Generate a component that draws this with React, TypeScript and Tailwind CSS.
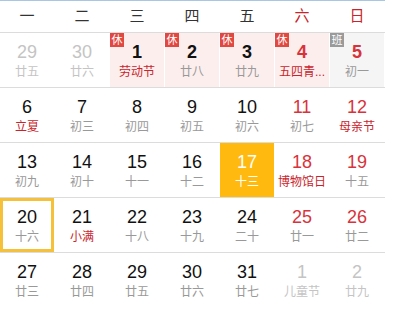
type Day = {
  n: number
  lunar: string
  kind?: "out" | "weekend" | "today"
  lunarRed?: boolean
  bg?: "holiday" | "work"
  badge?: "休" | "班"
  selected?: boolean
}

const weekdays = ["一", "二", "三", "四", "五", "六", "日"]

const rows: Day[][] = [
  [
    { n: 29, lunar: "廿五", kind: "out" },
    { n: 30, lunar: "廿六", kind: "out" },
    { n: 1, lunar: "劳动节", lunarRed: true, bg: "holiday", badge: "休" },
    { n: 2, lunar: "廿八", bg: "holiday", badge: "休" },
    { n: 3, lunar: "廿九", bg: "holiday", badge: "休" },
    { n: 4, lunar: "五四青...", kind: "weekend", lunarRed: true, bg: "holiday", badge: "休" },
    { n: 5, lunar: "初一", kind: "weekend", bg: "work", badge: "班" }
  ],
  [
    { n: 6, lunar: "立夏", lunarRed: true },
    { n: 7, lunar: "初三" },
    { n: 8, lunar: "初四" },
    { n: 9, lunar: "初五" },
    { n: 10, lunar: "初六" },
    { n: 11, lunar: "初七", kind: "weekend" },
    { n: 12, lunar: "母亲节", kind: "weekend", lunarRed: true }
  ],
  [
    { n: 13, lunar: "初九" },
    { n: 14, lunar: "初十" },
    { n: 15, lunar: "十一" },
    { n: 16, lunar: "十二" },
    { n: 17, lunar: "十三", kind: "today" },
    { n: 18, lunar: "博物馆日", kind: "weekend", lunarRed: true },
    { n: 19, lunar: "十五", kind: "weekend" }
  ],
  [
    { n: 20, lunar: "十六", selected: true },
    { n: 21, lunar: "小满", lunarRed: true },
    { n: 22, lunar: "十八" },
    { n: 23, lunar: "十九" },
    { n: 24, lunar: "二十" },
    { n: 25, lunar: "廿一", kind: "weekend" },
    { n: 26, lunar: "廿二", kind: "weekend" }
  ],
  [
    { n: 27, lunar: "廿三" },
    { n: 28, lunar: "廿四" },
    { n: 29, lunar: "廿五" },
    { n: 30, lunar: "廿六" },
    { n: 31, lunar: "廿七" },
    { n: 1, lunar: "儿童节", kind: "out" },
    { n: 2, lunar: "廿九", kind: "out" }
  ]
]

function Cell({ d }: { d: Day }) {
  const bg =
    d.kind === "today"
      ? "bg-[#ffb90f]"
      : d.bg === "holiday"
        ? "bg-[#fdeeee]"
        : d.bg === "work"
          ? "bg-[#f5f5f5]"
          : "bg-white"
  const numColor =
    d.kind === "today"
      ? "text-white"
      : d.kind === "out"
        ? "text-[#c4c4c4]"
        : d.kind === "weekend"
          ? "text-[#d8333b]"
          : "text-[#111]"
  const lunarColor =
    d.kind === "today"
      ? "text-white"
      : d.kind === "out"
        ? "text-[#c4c4c4]"
        : d.lunarRed
          ? "text-[#c9242c]"
          : "text-[#999]"

  return (
    <div
      className={`relative flex h-[54px] flex-col items-center justify-center ${bg} ${
        d.selected ? "border-[3px] border-[#f5c13a]" : ""
      }`}
    >
      {d.badge && (
        <span
          className={`absolute left-0 top-0 flex h-[14px] w-[14px] items-center justify-center text-[11px] leading-none text-white ${
            d.badge === "休" ? "bg-[#e2483f]" : "bg-[#9a9a9a]"
          }`}
        >
          {d.badge}
        </span>
      )}
      <span className={`text-[18px] leading-[22px] ${d.badge ? "font-bold" : ""} ${numColor}`}>
        {d.n}
      </span>
      <span className={`mt-[1px] whitespace-nowrap text-[12px] leading-[16px] ${lunarColor}`}>
        {d.lunar}
      </span>
    </div>
  )
}

export default function App() {
  return (
    <div
      className="h-[319px] w-[394px] overflow-hidden bg-white"
      style={{ fontFamily: '"Liberation Sans", "Noto Sans CJK SC", sans-serif' }}
    >
      <div className="h-px w-[385px] bg-[#a9c7e3]" />
      <div className="grid h-[32px] w-[385px] grid-cols-[repeat(7,54px)] gap-x-px border-b border-[#dcdcdc]">
        {weekdays.map((w, i) => (
          <div
            key={w}
            className={`flex items-center justify-center text-[15px] ${
              i >= 5 ? "text-[#c9242c]" : "text-[#333]"
            }`}
          >
            {w}
          </div>
        ))}
      </div>
      {rows.map((row, ri) => (
        <div
          key={ri}
          className={`grid w-[385px] grid-cols-[repeat(7,54px)] gap-x-px ${
            ri < rows.length - 1 ? "border-b border-[#dcdcdc]" : ""
          }`}
        >
          {row.map((d, ci) => (
            <Cell key={ci} d={d} />
          ))}
        </div>
      ))}
    </div>
  )
}
